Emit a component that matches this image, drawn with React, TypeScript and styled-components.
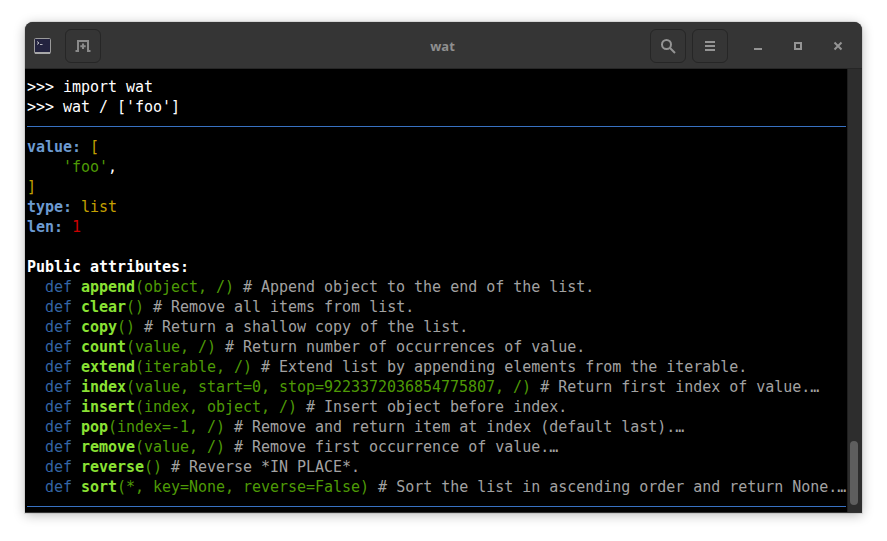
import React from 'react'
import styled, { createGlobalStyle } from 'styled-components'

const GlobalStyle = createGlobalStyle`
  html, body {
    margin: 0;
    padding: 0;
    background: #fff;
  }
`

const Page = styled.div`
  width: 887px;
  height: 541px;
  padding: 22px 25px 28px 25px;
  box-sizing: border-box;
  overflow: hidden;
`

const Window = styled.div`
  height: 491px;
  width: 837px;
  display: flex;
  flex-direction: column;
  padding-bottom: 1px;
  box-sizing: border-box;
  border-radius: 8px 8px 0 0;
  background: #333;
  overflow: hidden;
  box-shadow: 0 2px 12px rgba(0, 0, 0, 0.28), 0 0 0 1px rgba(0, 0, 0, 0.08);
`

const TitleBar = styled.header`
  height: 47px;
  flex: none;
  display: flex;
  align-items: center;
  padding: 2px 17px 0 0;
  box-sizing: border-box;
  background: #353535;
  border-bottom: 1px solid #262626;
  position: relative;
`

const AppIcon = styled.svg`
  width: 17px;
  height: 16px;
  margin-left: 9px;
  flex: none;
`

const HeaderButton = styled.button<{ $left?: number }>`
  width: 36px;
  height: 34px;
  margin-left: ${p => p.$left ?? 6}px;
  padding: 0;
  flex: none;
  display: flex;
  align-items: center;
  justify-content: center;
  background: #353535;
  border: 1px solid #262626;
  border-radius: 6px;
`

const Title = styled.div`
  position: absolute;
  left: -2px;
  right: 0;
  top: 15px;
  text-align: center;
  font: 700 13px/18px 'Noto Sans', 'Open Sans', sans-serif;
  color: #8f8f8f;
`

const Spacer = styled.div`
  flex: 1;
`

const WindowControl = styled.button<{ $left: number }>`
  width: 14px;
  height: 14px;
  margin-left: ${p => p.$left}px;
  padding: 0;
  flex: none;
  display: flex;
  background: none;
  border: 0;
`

const Body = styled.div`
  flex: 1;
  min-height: 0;
  display: flex;
  background: #000;
`

const Terminal = styled.main`
  flex: 1;
  min-width: 0;
  padding: 7px 1px 0 2px;
  overflow: hidden;
  font: 400 15px/22px 'DejaVu Sans Mono', monospace;
  letter-spacing: -0.03px;
  color: #fff;
`

const Line = styled.div`
  height: 20px;
  white-space: pre;
`

const Rule = styled.div`
  height: 20px;
  display: flex;
  align-items: center;
`

const RuleStroke = styled.div`
  flex: 1;
  height: 1px;
  background: #3871c1;
`

const Span = styled.span<{ $c?: string; $b?: boolean }>`
  color: ${p => p.$c ?? 'inherit'};
  font-weight: ${p => (p.$b ? 700 : 400)};
`

const ScrollTrack = styled.aside`
  width: 15px;
  flex: none;
  background: #2d2d2d;
  border-left: 1px solid #1f1f1f;
  box-sizing: border-box;
  display: flex;
  flex-direction: column;
  justify-content: flex-end;
  padding: 0 4px 7px 2px;
`

const ScrollThumb = styled.div`
  height: 64px;
  border-radius: 4px;
  background: #5e5e5e;
`

const BLUE = '#3465a4'
const KEY = '#6c9ad0'
const GREEN = '#8ae234'
const ARGS = '#4e9a06'
const GRAY = '#a2a2a2'
const YELLOW = '#c4a000'
const RED = '#cc0000'

const methods: [string, string, string][] = [
  ['append', '(object, /)', 'Append object to the end of the list.'],
  ['clear', '()', 'Remove all items from list.'],
  ['copy', '()', 'Return a shallow copy of the list.'],
  ['count', '(value, /)', 'Return number of occurrences of value.'],
  ['extend', '(iterable, /)', 'Extend list by appending elements from the iterable.'],
  ['index', '(value, start=0, stop=9223372036854775807, /)', 'Return first index of value.…'],
  ['insert', '(index, object, /)', 'Insert object before index.'],
  ['pop', '(index=-1, /)', 'Remove and return item at index (default last).…'],
  ['remove', '(value, /)', 'Remove first occurrence of value.…'],
  ['reverse', '()', 'Reverse *IN PLACE*.'],
  ['sort', '(*, key=None, reverse=False)', 'Sort the list in ascending order and return None.…'],
]

const App = () => {
  return (
    <Page>
      <GlobalStyle />
      <Window>
        <TitleBar>
          <AppIcon viewBox="0 0 17 16">
            <rect x="0.5" y="0.5" width="16" height="15" rx="1" fill="#23233f" stroke="#9a9a9a" />
            <rect x="1" y="14" width="15" height="2" fill="#a8a8a8" />
            <path d="M3 3.5l2 1.5-2 1.5M6 6.5h2.5" fill="none" stroke="#e0e0e0" strokeWidth="0.8" />
          </AppIcon>
          <HeaderButton $left={14}>
            <svg width="16" height="16" viewBox="0 0 16 16" fill="none" stroke="#8a8a8a" strokeWidth="2">
              <path d="M0.5 13h2.5V3h10v10h2.5" />
              <path d="M8 5.5v5.5M5.3 8.2h5.4" />
            </svg>
          </HeaderButton>
          <Title>wat</Title>
          <Spacer />
          <HeaderButton>
            <svg width="16" height="16" viewBox="0 0 16 16" fill="none" stroke="#949494" strokeWidth="2">
              <circle cx="6.5" cy="6.5" r="4.5" />
              <path d="M10 10l5 5" />
            </svg>
          </HeaderButton>
          <HeaderButton>
            <svg width="12" height="12" viewBox="0 0 12 12" fill="#949494">
              <rect x="1" y="1" width="10" height="2" />
              <rect x="1" y="5" width="10" height="2" />
              <rect x="1" y="9" width="10" height="2" />
            </svg>
          </HeaderButton>
          <WindowControl $left={23}>
            <svg width="14" height="14" viewBox="0 0 14 14" fill="#949494">
              <rect x="3" y="9" width="8" height="2" />
            </svg>
          </WindowControl>
          <WindowControl $left={26}>
            <svg width="14" height="14" viewBox="0 0 14 14" fill="none" stroke="#949494" strokeWidth="2">
              <rect x="4" y="4" width="6" height="6" />
            </svg>
          </WindowControl>
          <WindowControl $left={26}>
            <svg width="14" height="14" viewBox="0 0 14 14" fill="none" stroke="#949494" strokeWidth="2">
              <path d="M3.5 3.5l7 7M10.5 3.5l-7 7" />
            </svg>
          </WindowControl>
        </TitleBar>
        <Body>
          <Terminal>
            <Line>{'>>> import wat'}</Line>
            <Line>{">>> wat / ['foo']"}</Line>
            <Rule><RuleStroke /></Rule>
            <Line>
              <Span $c={KEY} $b>value:</Span> <Span $c={YELLOW}>[</Span>
            </Line>
            <Line>
              {'    '}<Span $c={ARGS}>'foo'</Span>,
            </Line>
            <Line><Span $c={YELLOW}>]</Span></Line>
            <Line>
              <Span $c={KEY} $b>type:</Span> <Span $c={YELLOW}>list</Span>
            </Line>
            <Line>
              <Span $c={KEY} $b>len:</Span> <Span $c={RED}>1</Span>
            </Line>
            <Line />
            <Line><Span $b>Public attributes:</Span></Line>
            {methods.map(([name, args, doc]) => (
              <Line key={name}>
                {'  '}<Span $c={BLUE}>def</Span> <Span $c={GREEN} $b>{name}</Span>
                <Span $c={ARGS}>{args}</Span> <Span $c={GRAY}># {doc}</Span>
              </Line>
            ))}
            <Rule><RuleStroke /></Rule>
          </Terminal>
          <ScrollTrack>
            <ScrollThumb />
          </ScrollTrack>
        </Body>
      </Window>
    </Page>
  )
}

export default App
